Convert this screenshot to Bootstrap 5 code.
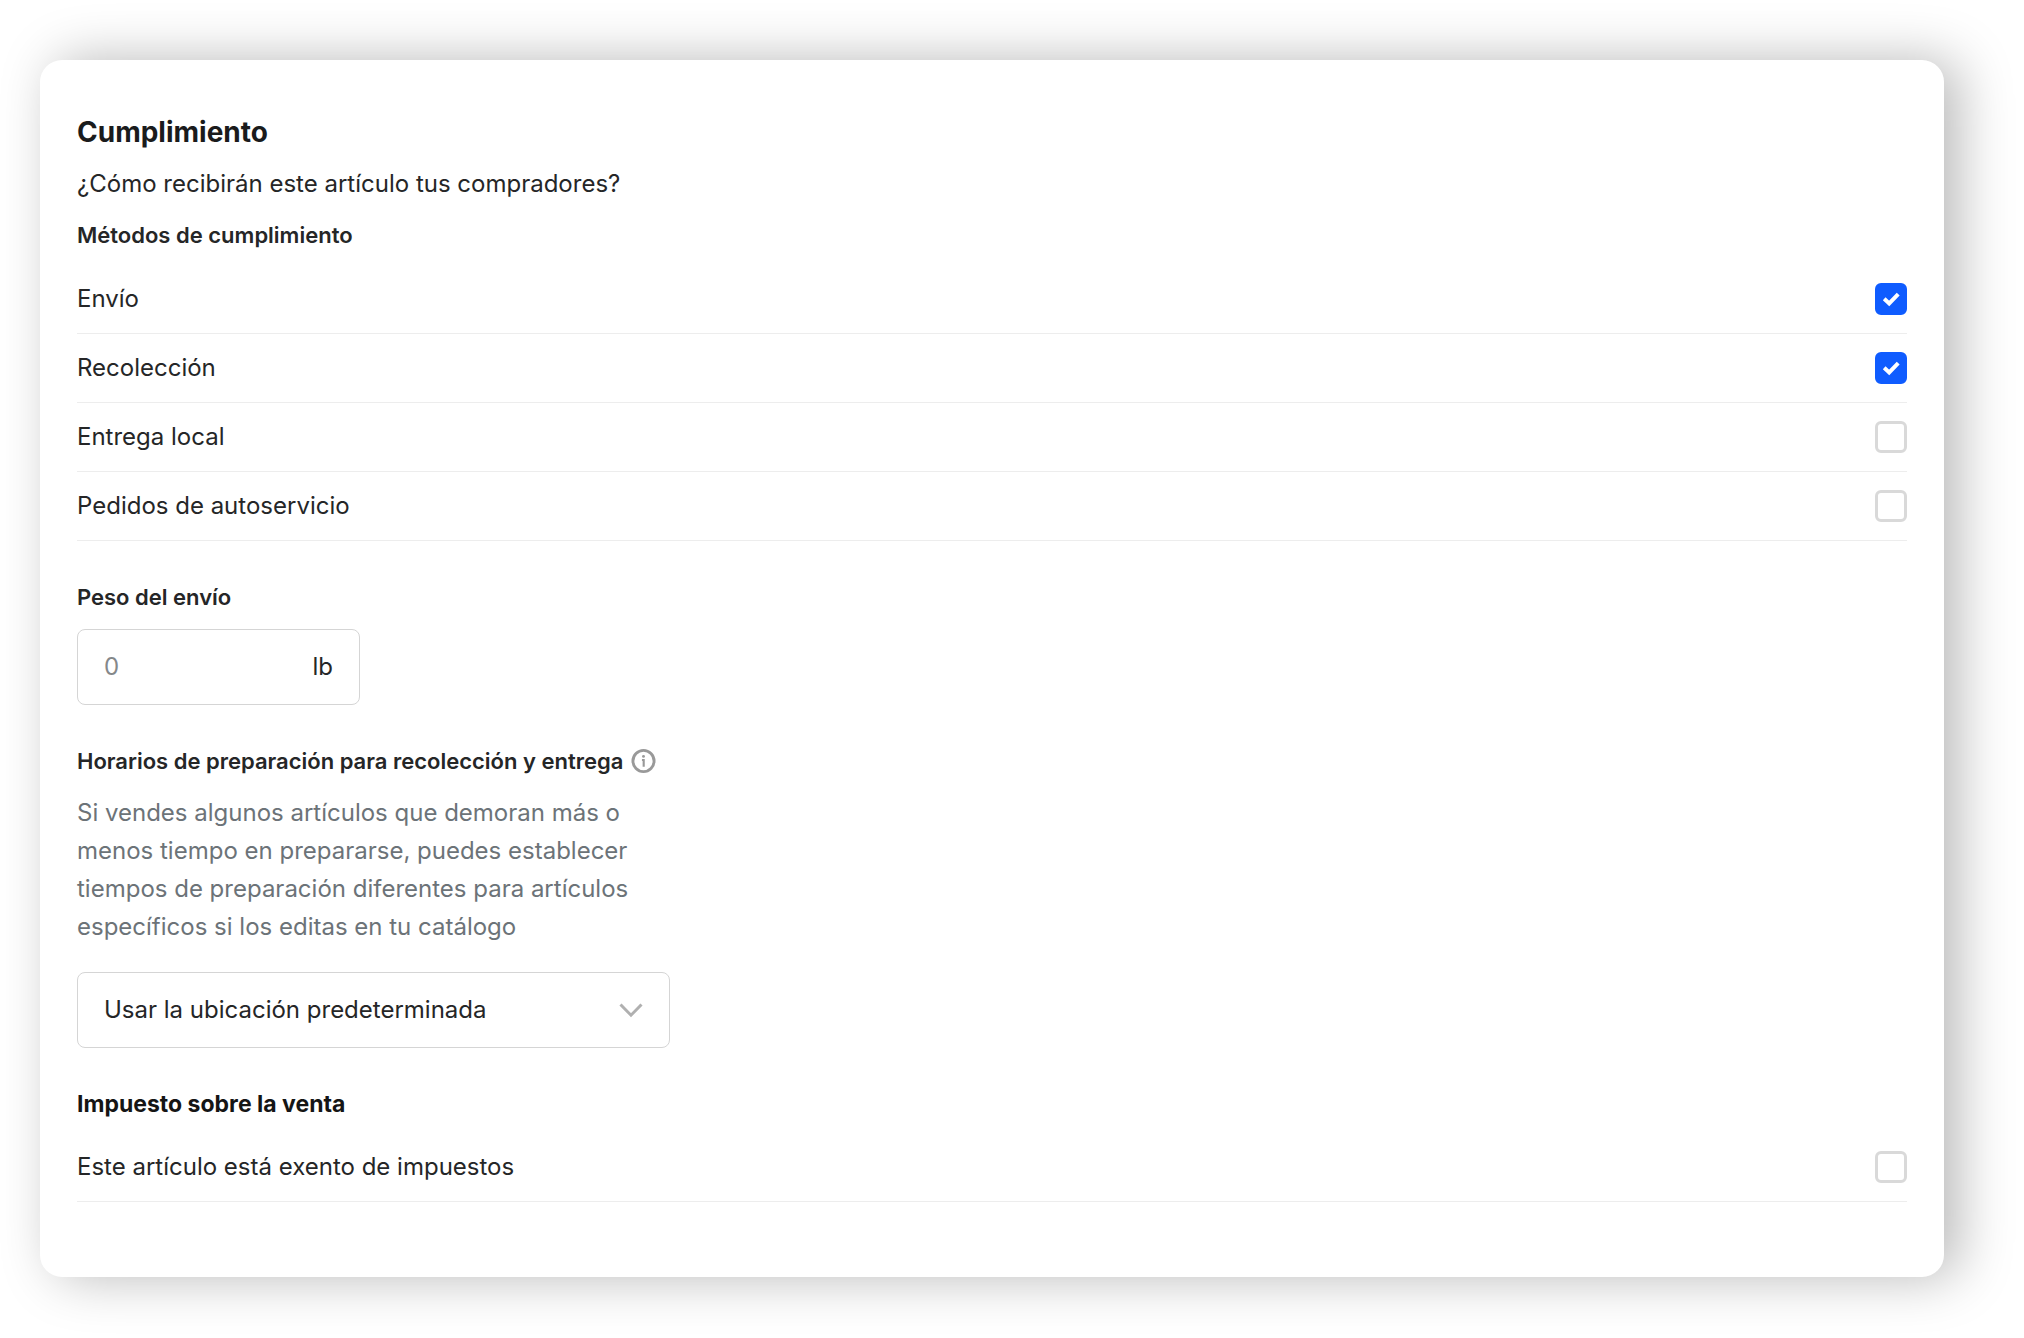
<!DOCTYPE html>
<html lang="es">
<head>
<meta charset="utf-8">
<meta name="viewport" content="width=device-width, initial-scale=1">
<title>Cumplimiento</title>
<link href="https://cdn.jsdelivr.net/npm/bootstrap@5.3.0/dist/css/bootstrap.min.css" rel="stylesheet">
<style>
  body { font-family: Inter, Roboto, sans-serif; font-size: 24px; line-height: 38px; color: #252627; background: #fff; }
  .page-wrap { padding: 60px 80px 60px 40px; }
  .panel { border-radius: 22px; padding: 52px 37px 75px; box-shadow: 15px 0 54px rgba(0, 0, 0, .28); }
  .panel-title { font-size: 28px; line-height: 40px; font-weight: 700; color: #1a1b1c; margin-bottom: 13px; }
  .section-label { font-size: 22px; line-height: 32px; font-weight: 600; margin: 0; }
  .section-label.strong-label { font-size: 23px; font-weight: 700; color: #151515; }
  .option-list { margin-top: 14px; }
  .option-row { min-height: 69px; border-bottom: 1px solid #ededed; }
  .option-row .form-check-input { width: 32px; height: 32px; border: 3px solid #d9d9d9; border-radius: 6px; background-size: 32px 32px; }
  .option-row .form-check-input:checked {
    border-color: #0f5cff; background-color: #0f5cff; background-origin: border-box;
    background-image: url("data:image/svg+xml,%3Csvg xmlns='http://www.w3.org/2000/svg' viewBox='0 0 32 32'%3E%3Cpath d='M9.2 15.8l5 4.6 9-9.2' fill='none' stroke='%23fff' stroke-width='4'/%3E%3C/svg%3E");
  }
  .field-box { height: 76px; font-size: 24px; color: #252627; border: 1px solid #d5d5d5; border-radius: 8px; background-color: #fff; padding: 0 26px; }
  .weight-field { max-width: 283px; }
  .weight-field .form-control { border: 0; padding: 0; font-size: 24px; background: none; color: #252627; }
  .weight-field .form-control::placeholder { color: #85888a; opacity: 1; }
  .prep-field { max-width: 593px; }
  .prep-field .field-box {
    background-size: 26px 16px; background-position: right 25px center;
    background-image: url("data:image/svg+xml,%3Csvg xmlns='http://www.w3.org/2000/svg' viewBox='0 0 26 16'%3E%3Cpath d='M2.5 2.5L13 13.2 23.5 2.5' fill='none' stroke='%23b0b0b0' stroke-width='3'/%3E%3C/svg%3E");
  }
  .help-text { color: #6c7378; margin: 17px 0 26px; }
  .gap-label { margin-bottom: 16px; }
  .block-top { margin-top: 40px; }
  .strong-label + .option-row { margin-top: 13px; }
</style>
</head>
<body>
<main class="page-wrap">
  <form class="panel bg-white">
    <h1 class="panel-title">Cumplimiento</h1>
    <p class="mb-3">¿Cómo recibirán este artículo tus compradores?</p>
    <h2 class="section-label">Métodos de cumplimiento</h2>
    <div class="option-list">
      <div class="option-row d-flex align-items-center justify-content-between">
        <label for="m-envio">Envío</label>
        <input class="form-check-input m-0" type="checkbox" id="m-envio" checked>
      </div>
      <div class="option-row d-flex align-items-center justify-content-between">
        <label for="m-recoleccion">Recolección</label>
        <input class="form-check-input m-0" type="checkbox" id="m-recoleccion" checked>
      </div>
      <div class="option-row d-flex align-items-center justify-content-between">
        <label for="m-local">Entrega local</label>
        <input class="form-check-input m-0" type="checkbox" id="m-local">
      </div>
      <div class="option-row d-flex align-items-center justify-content-between">
        <label for="m-auto">Pedidos de autoservicio</label>
        <input class="form-check-input m-0" type="checkbox" id="m-auto">
      </div>
    </div>

    <div class="block-top">
      <label class="section-label gap-label d-block" for="peso">Peso del envío</label>
      <div class="field-box weight-field d-flex align-items-center">
        <input class="form-control shadow-none" type="text" inputmode="decimal" id="peso" placeholder="0">
        <span>lb</span>
      </div>
    </div>

    <div class="block-top prep-field">
      <div class="d-flex align-items-center">
        <label class="section-label" for="horario">Horarios de preparación para recolección y entrega</label>
        <button type="button" class="btn p-0 border-0 ms-2 d-flex" aria-label="Más información">
          <svg width="25" height="26" viewBox="0 0 26 26" aria-hidden="true"><circle cx="13" cy="13" r="11" fill="none" stroke="#999" stroke-width="3"/><circle cx="13" cy="8.2" r="1.5" fill="#999"/><path d="M11.4 12h1.8v7" fill="none" stroke="#999" stroke-width="2.2"/></svg>
        </button>
      </div>
      <p class="help-text">Si vendes algunos artículos que demoran más o menos tiempo en prepararse, puedes establecer tiempos de preparación diferentes para artículos específicos si los editas en tu catálogo</p>
      <select class="form-select field-box" id="horario">
        <option>Usar la ubicación predeterminada</option>
      </select>
    </div>

    <div class="block-top">
      <h2 class="section-label strong-label">Impuesto sobre la venta</h2>
      <div class="option-row d-flex align-items-center justify-content-between">
        <label for="exento">Este artículo está exento de impuestos</label>
        <input class="form-check-input m-0" type="checkbox" id="exento">
      </div>
    </div>
  </form>
</main>
<script src="https://cdn.jsdelivr.net/npm/bootstrap@5.3.0/dist/js/bootstrap.bundle.min.js"></script>
</body>
</html>
